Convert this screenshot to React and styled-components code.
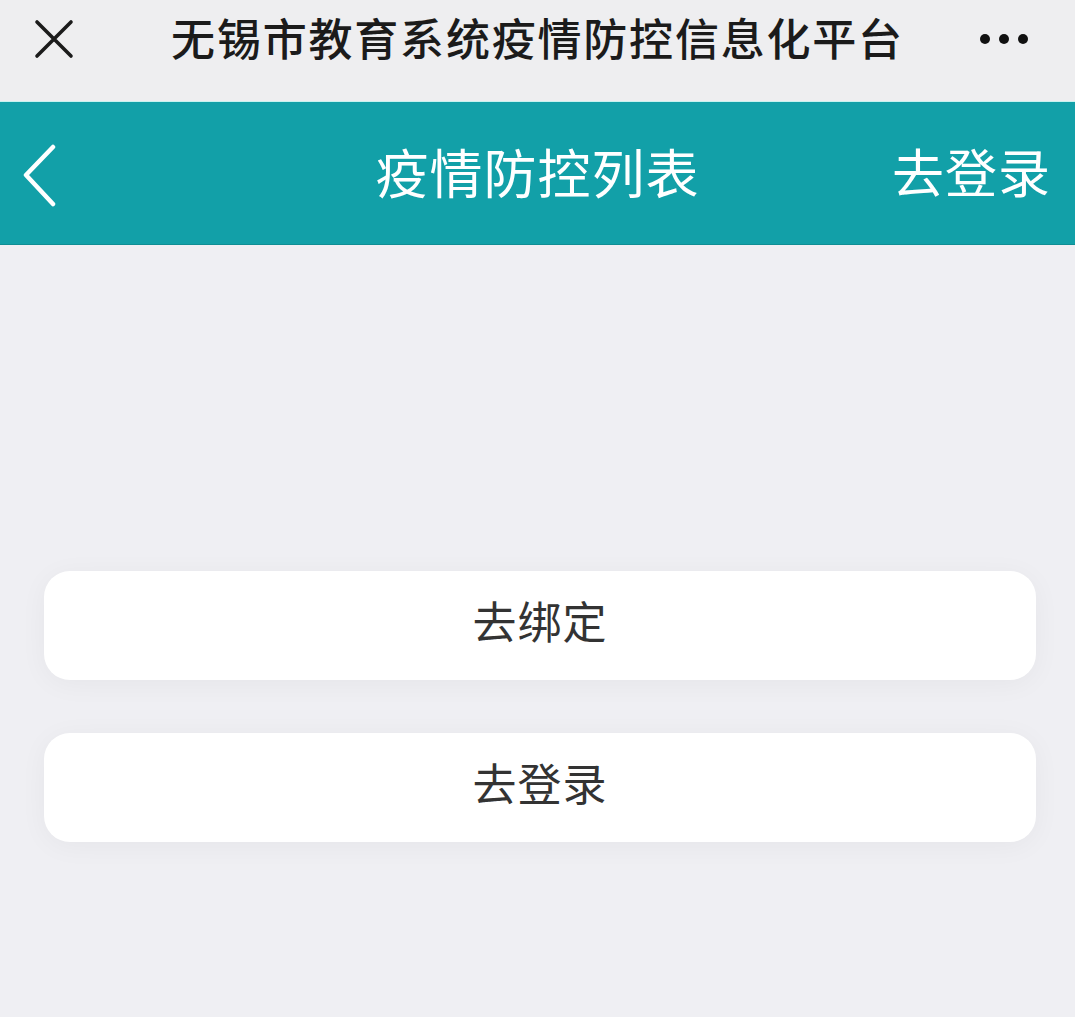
import React from "react";
import styled, { createGlobalStyle } from "styled-components";

const GlobalStyle = createGlobalStyle`
    html, body {
        margin: 0;
        padding: 0;
        background: #efeff3;
        font-family: "Noto Sans CJK SC", "Noto Sans", sans-serif;
    }
    * {
        box-sizing: border-box;
    }
`;

const Page = styled.div`
    width: 1075px;
    min-height: 1017px;
    background: #efeff3;
    display: flex;
    flex-direction: column;
`;

const TopBar = styled.div`
    height: 102px;
    display: grid;
    grid-template-columns: 120px 1fr 120px;
    align-items: center;
    padding-bottom: 24px;
    background: #eeeef0;
    border-bottom: 1px solid #c8f3f0;
`;

const TopTitle = styled.div`
    text-align: center;
    font-size: 44px;
    font-weight: 500;
    color: #1b1b1b;
    letter-spacing: 1.8px;
    line-height: 1;
    margin-top: -4px;
`;

const IconCell = styled.div`
    display: flex;
    align-items: center;
    justify-content: ${({ $align }) => $align || "flex-start"};
    padding: ${({ $pad }) => $pad || "0"};
`;

const Header = styled.div`
    height: 143px;
    background: #12a0a8;
    display: grid;
    grid-template-columns: 200px 1fr 200px;
    align-items: center;
    border-bottom: 1px solid #0f8e94;
`;

const HeaderTitle = styled.div`
    text-align: center;
    color: #ffffff;
    font-size: 53px;
    line-height: 1;
    margin-top: -4px;
    letter-spacing: 1px;
`;

const HeaderAction = styled.div`
    text-align: right;
    color: #ffffff;
    font-size: 52px;
    line-height: 1;
    padding-right: 24px;
    margin-top: -4px;
    letter-spacing: 1px;
`;

const ButtonList = styled.div`
    display: flex;
    flex-direction: column;
    gap: 53px;
    padding: 326px 39px 0 44px;
`;

const ActionButton = styled.div`
    height: 109px;
    background: #ffffff;
    border-radius: 26px;
    display: flex;
    align-items: center;
    justify-content: center;
    padding-bottom: 12px;
    font-size: 44px;
    color: #333333;
    box-shadow: 0 4px 28px rgba(0, 0, 0, 0.045);
    letter-spacing: 1px;
`;

const CloseIcon = () => (
    <svg width="40" height="40" viewBox="0 0 40 40">
        <path d="M3 3 L37 37 M37 3 L3 37" stroke="#1b1b1b" strokeWidth="3.6" strokeLinecap="round" />
    </svg>
);

const MoreIcon = () => (
    <svg width="50" height="14" viewBox="0 0 50 14">
        <circle cx="6" cy="7" r="5" fill="#111" />
        <circle cx="25" cy="7" r="5" fill="#111" />
        <circle cx="44" cy="7" r="5" fill="#111" />
    </svg>
);

const BackIcon = () => (
    <svg width="40" height="64" viewBox="0 0 40 64">
        <path d="M33 3 L6 31 L33 60" stroke="#ffffff" strokeWidth="4.5" fill="none" strokeLinecap="round" strokeLinejoin="round" />
    </svg>
);

export default function App() {
    return (
        <Page>
            <GlobalStyle />
            <TopBar>
                <IconCell $pad="0 0 0 34px">
                    <CloseIcon />
                </IconCell>
                <TopTitle>无锡市教育系统疫情防控信息化平台</TopTitle>
                <IconCell $align="flex-end" $pad="0 46px 0 0">
                    <MoreIcon />
                </IconCell>
            </TopBar>
            <Header>
                <IconCell $pad="6px 0 0 20px">
                    <BackIcon />
                </IconCell>
                <HeaderTitle>疫情防控列表</HeaderTitle>
                <HeaderAction>去登录</HeaderAction>
            </Header>
            <ButtonList>
                <ActionButton>去绑定</ActionButton>
                <ActionButton>去登录</ActionButton>
            </ButtonList>
        </Page>
    );
}
